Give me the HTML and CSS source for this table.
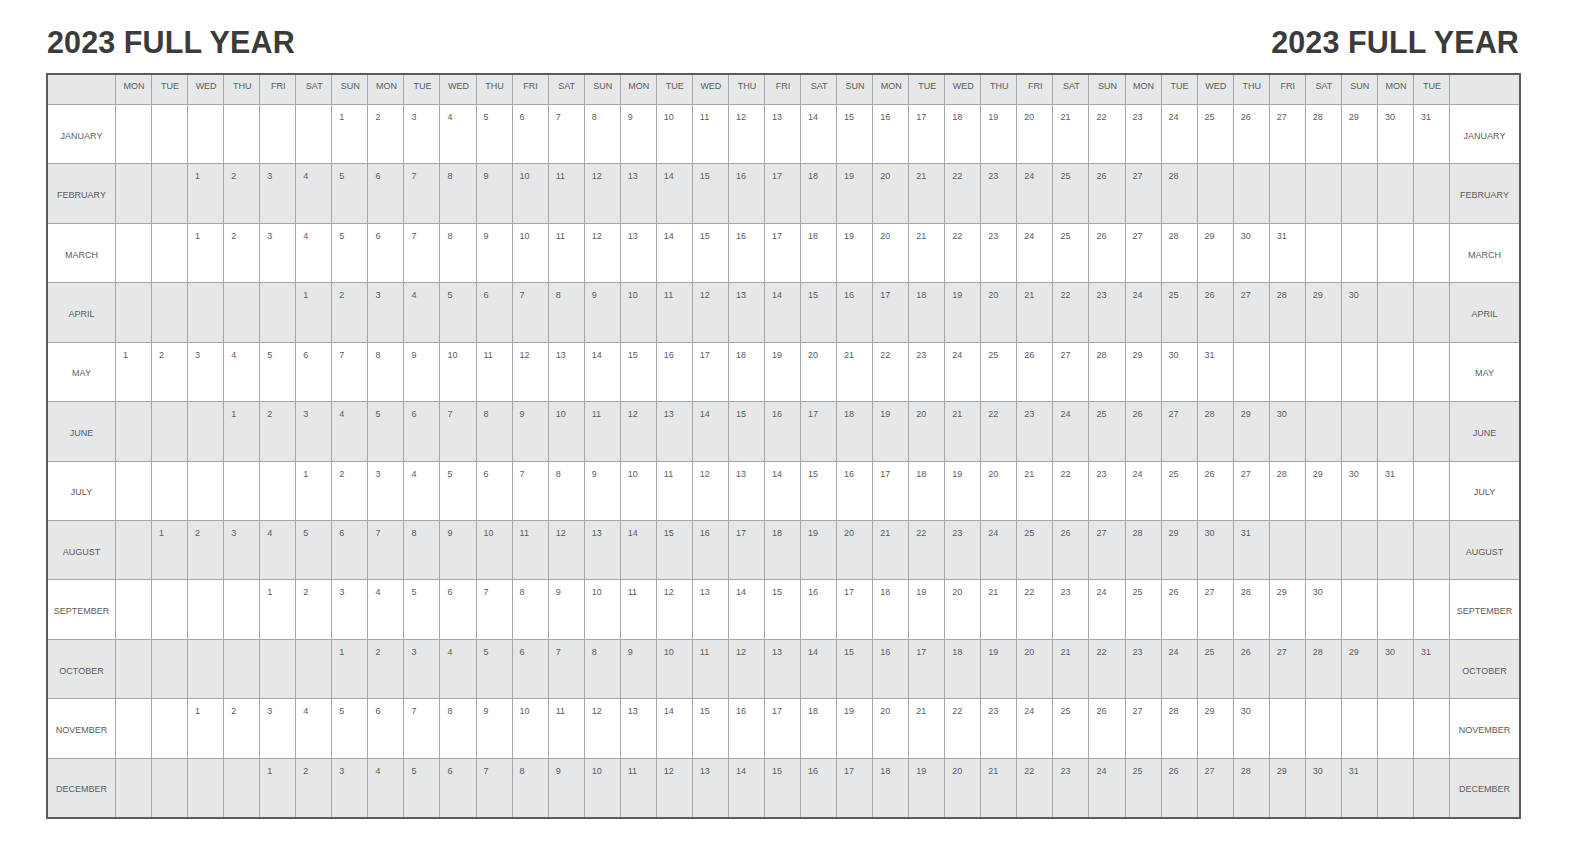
FILE: index.html
```html
<!DOCTYPE html>
<html lang="en">
<head>
<meta charset="utf-8">
<title>2023 Full Year</title>
<link rel="stylesheet" href="styles.css">
</head>
<body>
<div class="page">
  <div class="titles">
    <h1 class="title">2023 FULL YEAR</h1>
    <h1 class="title">2023 FULL YEAR</h1>
  </div>
  <div class="cal">
    <div class="row head">
      <div class="lab"></div>
      <div class="dn">MON</div><div class="dn">TUE</div><div class="dn">WED</div><div class="dn">THU</div><div class="dn">FRI</div><div class="dn">SAT</div><div class="dn">SUN</div>
      <div class="dn">MON</div><div class="dn">TUE</div><div class="dn">WED</div><div class="dn">THU</div><div class="dn">FRI</div><div class="dn">SAT</div><div class="dn">SUN</div>
      <div class="dn">MON</div><div class="dn">TUE</div><div class="dn">WED</div><div class="dn">THU</div><div class="dn">FRI</div><div class="dn">SAT</div><div class="dn">SUN</div>
      <div class="dn">MON</div><div class="dn">TUE</div><div class="dn">WED</div><div class="dn">THU</div><div class="dn">FRI</div><div class="dn">SAT</div><div class="dn">SUN</div>
      <div class="dn">MON</div><div class="dn">TUE</div><div class="dn">WED</div><div class="dn">THU</div><div class="dn">FRI</div><div class="dn">SAT</div><div class="dn">SUN</div>
      <div class="dn">MON</div><div class="dn">TUE</div>
      <div class="lab end"></div>
    </div>

    <div class="row">
      <div class="lab">JANUARY</div>
      <div class="d"></div><div class="d"></div><div class="d"></div><div class="d"></div><div class="d"></div><div class="d"></div>
      <div class="d">1</div><div class="d">2</div><div class="d">3</div><div class="d">4</div><div class="d">5</div><div class="d">6</div><div class="d">7</div><div class="d">8</div><div class="d">9</div><div class="d">10</div><div class="d">11</div><div class="d">12</div><div class="d">13</div><div class="d">14</div><div class="d">15</div><div class="d">16</div><div class="d">17</div><div class="d">18</div><div class="d">19</div><div class="d">20</div><div class="d">21</div><div class="d">22</div><div class="d">23</div><div class="d">24</div><div class="d">25</div><div class="d">26</div><div class="d">27</div><div class="d">28</div><div class="d">29</div><div class="d">30</div><div class="d">31</div>
      <div class="lab end">JANUARY</div>
    </div>

    <div class="row shade">
      <div class="lab">FEBRUARY</div>
      <div class="d"></div><div class="d"></div>
      <div class="d">1</div><div class="d">2</div><div class="d">3</div><div class="d">4</div><div class="d">5</div><div class="d">6</div><div class="d">7</div><div class="d">8</div><div class="d">9</div><div class="d">10</div><div class="d">11</div><div class="d">12</div><div class="d">13</div><div class="d">14</div><div class="d">15</div><div class="d">16</div><div class="d">17</div><div class="d">18</div><div class="d">19</div><div class="d">20</div><div class="d">21</div><div class="d">22</div><div class="d">23</div><div class="d">24</div><div class="d">25</div><div class="d">26</div><div class="d">27</div><div class="d">28</div>
      <div class="d"></div><div class="d"></div><div class="d"></div><div class="d"></div><div class="d"></div><div class="d"></div><div class="d"></div>
      <div class="lab end">FEBRUARY</div>
    </div>

    <div class="row">
      <div class="lab">MARCH</div>
      <div class="d"></div><div class="d"></div>
      <div class="d">1</div><div class="d">2</div><div class="d">3</div><div class="d">4</div><div class="d">5</div><div class="d">6</div><div class="d">7</div><div class="d">8</div><div class="d">9</div><div class="d">10</div><div class="d">11</div><div class="d">12</div><div class="d">13</div><div class="d">14</div><div class="d">15</div><div class="d">16</div><div class="d">17</div><div class="d">18</div><div class="d">19</div><div class="d">20</div><div class="d">21</div><div class="d">22</div><div class="d">23</div><div class="d">24</div><div class="d">25</div><div class="d">26</div><div class="d">27</div><div class="d">28</div><div class="d">29</div><div class="d">30</div><div class="d">31</div>
      <div class="d"></div><div class="d"></div><div class="d"></div><div class="d"></div>
      <div class="lab end">MARCH</div>
    </div>

    <div class="row shade">
      <div class="lab">APRIL</div>
      <div class="d"></div><div class="d"></div><div class="d"></div><div class="d"></div><div class="d"></div>
      <div class="d">1</div><div class="d">2</div><div class="d">3</div><div class="d">4</div><div class="d">5</div><div class="d">6</div><div class="d">7</div><div class="d">8</div><div class="d">9</div><div class="d">10</div><div class="d">11</div><div class="d">12</div><div class="d">13</div><div class="d">14</div><div class="d">15</div><div class="d">16</div><div class="d">17</div><div class="d">18</div><div class="d">19</div><div class="d">20</div><div class="d">21</div><div class="d">22</div><div class="d">23</div><div class="d">24</div><div class="d">25</div><div class="d">26</div><div class="d">27</div><div class="d">28</div><div class="d">29</div><div class="d">30</div>
      <div class="d"></div><div class="d"></div>
      <div class="lab end">APRIL</div>
    </div>

    <div class="row">
      <div class="lab">MAY</div>
      <div class="d">1</div><div class="d">2</div><div class="d">3</div><div class="d">4</div><div class="d">5</div><div class="d">6</div><div class="d">7</div><div class="d">8</div><div class="d">9</div><div class="d">10</div><div class="d">11</div><div class="d">12</div><div class="d">13</div><div class="d">14</div><div class="d">15</div><div class="d">16</div><div class="d">17</div><div class="d">18</div><div class="d">19</div><div class="d">20</div><div class="d">21</div><div class="d">22</div><div class="d">23</div><div class="d">24</div><div class="d">25</div><div class="d">26</div><div class="d">27</div><div class="d">28</div><div class="d">29</div><div class="d">30</div><div class="d">31</div>
      <div class="d"></div><div class="d"></div><div class="d"></div><div class="d"></div><div class="d"></div><div class="d"></div>
      <div class="lab end">MAY</div>
    </div>

    <div class="row shade">
      <div class="lab">JUNE</div>
      <div class="d"></div><div class="d"></div><div class="d"></div>
      <div class="d">1</div><div class="d">2</div><div class="d">3</div><div class="d">4</div><div class="d">5</div><div class="d">6</div><div class="d">7</div><div class="d">8</div><div class="d">9</div><div class="d">10</div><div class="d">11</div><div class="d">12</div><div class="d">13</div><div class="d">14</div><div class="d">15</div><div class="d">16</div><div class="d">17</div><div class="d">18</div><div class="d">19</div><div class="d">20</div><div class="d">21</div><div class="d">22</div><div class="d">23</div><div class="d">24</div><div class="d">25</div><div class="d">26</div><div class="d">27</div><div class="d">28</div><div class="d">29</div><div class="d">30</div>
      <div class="d"></div><div class="d"></div><div class="d"></div><div class="d"></div>
      <div class="lab end">JUNE</div>
    </div>

    <div class="row">
      <div class="lab">JULY</div>
      <div class="d"></div><div class="d"></div><div class="d"></div><div class="d"></div><div class="d"></div>
      <div class="d">1</div><div class="d">2</div><div class="d">3</div><div class="d">4</div><div class="d">5</div><div class="d">6</div><div class="d">7</div><div class="d">8</div><div class="d">9</div><div class="d">10</div><div class="d">11</div><div class="d">12</div><div class="d">13</div><div class="d">14</div><div class="d">15</div><div class="d">16</div><div class="d">17</div><div class="d">18</div><div class="d">19</div><div class="d">20</div><div class="d">21</div><div class="d">22</div><div class="d">23</div><div class="d">24</div><div class="d">25</div><div class="d">26</div><div class="d">27</div><div class="d">28</div><div class="d">29</div><div class="d">30</div><div class="d">31</div>
      <div class="d"></div>
      <div class="lab end">JULY</div>
    </div>

    <div class="row shade">
      <div class="lab">AUGUST</div>
      <div class="d"></div>
      <div class="d">1</div><div class="d">2</div><div class="d">3</div><div class="d">4</div><div class="d">5</div><div class="d">6</div><div class="d">7</div><div class="d">8</div><div class="d">9</div><div class="d">10</div><div class="d">11</div><div class="d">12</div><div class="d">13</div><div class="d">14</div><div class="d">15</div><div class="d">16</div><div class="d">17</div><div class="d">18</div><div class="d">19</div><div class="d">20</div><div class="d">21</div><div class="d">22</div><div class="d">23</div><div class="d">24</div><div class="d">25</div><div class="d">26</div><div class="d">27</div><div class="d">28</div><div class="d">29</div><div class="d">30</div><div class="d">31</div>
      <div class="d"></div><div class="d"></div><div class="d"></div><div class="d"></div><div class="d"></div>
      <div class="lab end">AUGUST</div>
    </div>

    <div class="row">
      <div class="lab">SEPTEMBER</div>
      <div class="d"></div><div class="d"></div><div class="d"></div><div class="d"></div>
      <div class="d">1</div><div class="d">2</div><div class="d">3</div><div class="d">4</div><div class="d">5</div><div class="d">6</div><div class="d">7</div><div class="d">8</div><div class="d">9</div><div class="d">10</div><div class="d">11</div><div class="d">12</div><div class="d">13</div><div class="d">14</div><div class="d">15</div><div class="d">16</div><div class="d">17</div><div class="d">18</div><div class="d">19</div><div class="d">20</div><div class="d">21</div><div class="d">22</div><div class="d">23</div><div class="d">24</div><div class="d">25</div><div class="d">26</div><div class="d">27</div><div class="d">28</div><div class="d">29</div><div class="d">30</div>
      <div class="d"></div><div class="d"></div><div class="d"></div>
      <div class="lab end">SEPTEMBER</div>
    </div>

    <div class="row shade">
      <div class="lab">OCTOBER</div>
      <div class="d"></div><div class="d"></div><div class="d"></div><div class="d"></div><div class="d"></div><div class="d"></div>
      <div class="d">1</div><div class="d">2</div><div class="d">3</div><div class="d">4</div><div class="d">5</div><div class="d">6</div><div class="d">7</div><div class="d">8</div><div class="d">9</div><div class="d">10</div><div class="d">11</div><div class="d">12</div><div class="d">13</div><div class="d">14</div><div class="d">15</div><div class="d">16</div><div class="d">17</div><div class="d">18</div><div class="d">19</div><div class="d">20</div><div class="d">21</div><div class="d">22</div><div class="d">23</div><div class="d">24</div><div class="d">25</div><div class="d">26</div><div class="d">27</div><div class="d">28</div><div class="d">29</div><div class="d">30</div><div class="d">31</div>
      <div class="lab end">OCTOBER</div>
    </div>

    <div class="row">
      <div class="lab">NOVEMBER</div>
      <div class="d"></div><div class="d"></div>
      <div class="d">1</div><div class="d">2</div><div class="d">3</div><div class="d">4</div><div class="d">5</div><div class="d">6</div><div class="d">7</div><div class="d">8</div><div class="d">9</div><div class="d">10</div><div class="d">11</div><div class="d">12</div><div class="d">13</div><div class="d">14</div><div class="d">15</div><div class="d">16</div><div class="d">17</div><div class="d">18</div><div class="d">19</div><div class="d">20</div><div class="d">21</div><div class="d">22</div><div class="d">23</div><div class="d">24</div><div class="d">25</div><div class="d">26</div><div class="d">27</div><div class="d">28</div><div class="d">29</div><div class="d">30</div>
      <div class="d"></div><div class="d"></div><div class="d"></div><div class="d"></div><div class="d"></div>
      <div class="lab end">NOVEMBER</div>
    </div>

    <div class="row shade last">
      <div class="lab">DECEMBER</div>
      <div class="d"></div><div class="d"></div><div class="d"></div><div class="d"></div>
      <div class="d">1</div><div class="d">2</div><div class="d">3</div><div class="d">4</div><div class="d">5</div><div class="d">6</div><div class="d">7</div><div class="d">8</div><div class="d">9</div><div class="d">10</div><div class="d">11</div><div class="d">12</div><div class="d">13</div><div class="d">14</div><div class="d">15</div><div class="d">16</div><div class="d">17</div><div class="d">18</div><div class="d">19</div><div class="d">20</div><div class="d">21</div><div class="d">22</div><div class="d">23</div><div class="d">24</div><div class="d">25</div><div class="d">26</div><div class="d">27</div><div class="d">28</div><div class="d">29</div><div class="d">30</div><div class="d">31</div>
      <div class="d"></div><div class="d"></div>
      <div class="lab end">DECEMBER</div>
    </div>
  </div>
</div>
</body>
</html>
```

FILE: styles.css
```css
* { box-sizing: border-box; }

html, body {
  margin: 0;
  padding: 0;
  background: #ffffff;
}

body {
  font-family: "Liberation Sans", Arial, sans-serif;
  color: #5a5a5a;
}

.page {
  width: 1588px;
  height: 864px;
  padding: 27px 67px 0 46px;
}

.titles {
  display: flex;
  justify-content: space-between;
  padding: 0 2px 0 1px;
}

.title {
  margin: 0;
  font-size: 30.5px;
  line-height: 30px;
  font-weight: 700;
  color: #3b3b3b;
  letter-spacing: 0.1px;
}

.cal {
  margin-top: 16px;
  width: 1475px;
  height: 746px;
  border: 2px solid #5c5c5c;
  display: flex;
  flex-direction: column;
}

.row {
  display: grid;
  grid-template-columns: 68px repeat(37, 1fr) 69px;
  flex: 1 1 0;
  min-height: 0;
  border-bottom: 1px solid #a6a6a6;
}

.row.last { border-bottom: none; }

.row.head {
  flex: 0 0 30px;
  background: #e6e7e8;
}

.row.shade { background: #e6e7e8; }

.row > div {
  border-right: 1px solid #a6a6a6;
  font-size: 9px;
  color: #5c5c5c;
}

.row > div.end { border-right: none; }

.lab {
  display: flex;
  align-items: center;
  justify-content: center;
  padding-top: 3px;
}

.dn {
  text-align: center;
  padding-top: 6px;
  padding-left: 1px;
  font-size: 9px;
}

.d {
  padding: 7px 0 0 7px;
  line-height: 11px;
}
```
